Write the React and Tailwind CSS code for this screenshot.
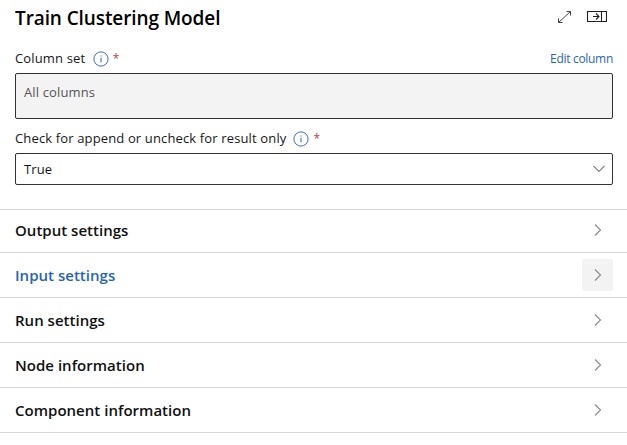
function Info() {
  return (
    <svg width="16" height="16" viewBox="0 0 16 16" fill="none" stroke="#4568c6" className="shrink-0">
      <circle cx="8" cy="8" r="7.1" strokeWidth="1" />
      <path d="M8 6.7V11.3" strokeWidth="1.1" />
      <path d="M8 4.4V5.6" strokeWidth="1.1" />
    </svg>
  );
}

function Chevron() {
  return (
    <svg width="8" height="14" viewBox="0 0 8 14" fill="none" stroke="#8a8a8a" strokeWidth="1.1">
      <path d="M1 1.5L6.5 7L1 12.5" />
    </svg>
  );
}

const rows = [
  { label: "Output settings", height: "h-[43px]", nudge: "pb-[2px]" },
  { label: "Input settings", height: "h-[45px]", nudge: "", active: true },
  { label: "Run settings", height: "h-[45px]", nudge: "" },
  { label: "Node information", height: "h-[45px]", nudge: "" },
  { label: "Component information", height: "h-[45px]", nudge: "" },
];

export default function App() {
  return (
    <div className="h-[445px] w-[627px] overflow-hidden bg-white font-['Open_Sans','Noto_Sans',sans-serif] text-[13px] tracking-[0.14px] text-[#171717]">
      <div className="flex h-[209px] flex-col pr-[14px] pl-[15px]">
        <header className="flex h-9 items-center justify-between">
          <h1 className="text-[19px] leading-6 font-semibold tracking-[-0.1px] whitespace-nowrap text-black">Train Clustering Model</h1>
          <div className="flex items-center gap-[14px] pr-[6px] pb-[3px]">
            <svg width="15" height="14" viewBox="0 0 15 14" fill="none" stroke="#444" strokeWidth="1">
              <path d="M1.5 12.5L13.5 1.5M9.5 1.5H13.5V5.5M1.5 8.5V12.5H5.5" />
            </svg>
            <svg width="21" height="12" viewBox="0 0 21 12" fill="none" stroke="#222" strokeWidth="1.1">
              <path d="M1.5 0.5H20.5V10.5H1.5ZM15.5 0.5V10.5M7 5.5H13M10 2.5L13 5.5L10 8.5" />
            </svg>
          </div>
        </header>
        <div className="mt-3 flex h-[25px] items-start justify-between leading-[21px]">
          <div className="flex items-start">
            <span className="whitespace-nowrap">Column set</span>
            <span className="mt-[3px] ml-[7.5px]"><Info /></span>
            <span className="ml-1 text-[12px] text-[#b0474c]">*</span>
          </div>
          <a className="text-[12px] leading-[22px] tracking-[-0.3px] whitespace-nowrap text-[#2b66bd]">Edit column</a>
        </div>
        <div className="h-[46px] shrink-0 rounded-[2px] border border-[#333] bg-[#f3f3f3] px-2 pt-2 leading-5 text-[#555]">All columns</div>
        <div className="flex h-[34px] items-start pt-[9px] leading-[21px]">
          <span className="whitespace-nowrap">Check for append or uncheck for result only</span>
          <span className="mt-[3px] ml-[7px]"><Info /></span>
          <span className="ml-1 text-[12px] text-[#b0474c]">*</span>
        </div>
        <div className="flex h-8 shrink-0 items-center justify-between rounded-[2px] border border-[#333] pr-[6px] pl-2">
          <span className="pt-px">True</span>
          <svg width="14" height="8" viewBox="0 0 14 8" fill="none" stroke="#858585" strokeWidth="1.1">
            <path d="M1.5 1L7 6.5L12.5 1" />
          </svg>
        </div>
      </div>
      <div className="border-t border-[#d6d6d6]">
        {rows.map((row) => (
          <div key={row.label} className={`flex items-center justify-between border-b border-[#d6d6d6] pr-[14px] pl-[15px] ${row.height} ${row.nudge}`}>
            <span className={`text-[15px] font-semibold tracking-[0.02px] whitespace-nowrap ${row.active ? "text-[#2563c0]" : "text-[#111]"}`}>{row.label}</span>
            <span className={`flex h-8 w-[31px] items-center justify-center rounded-[2px] ${row.active ? "bg-[#f3f3f3]" : ""}`}>
              <Chevron />
            </span>
          </div>
        ))}
      </div>
    </div>
  );
}
